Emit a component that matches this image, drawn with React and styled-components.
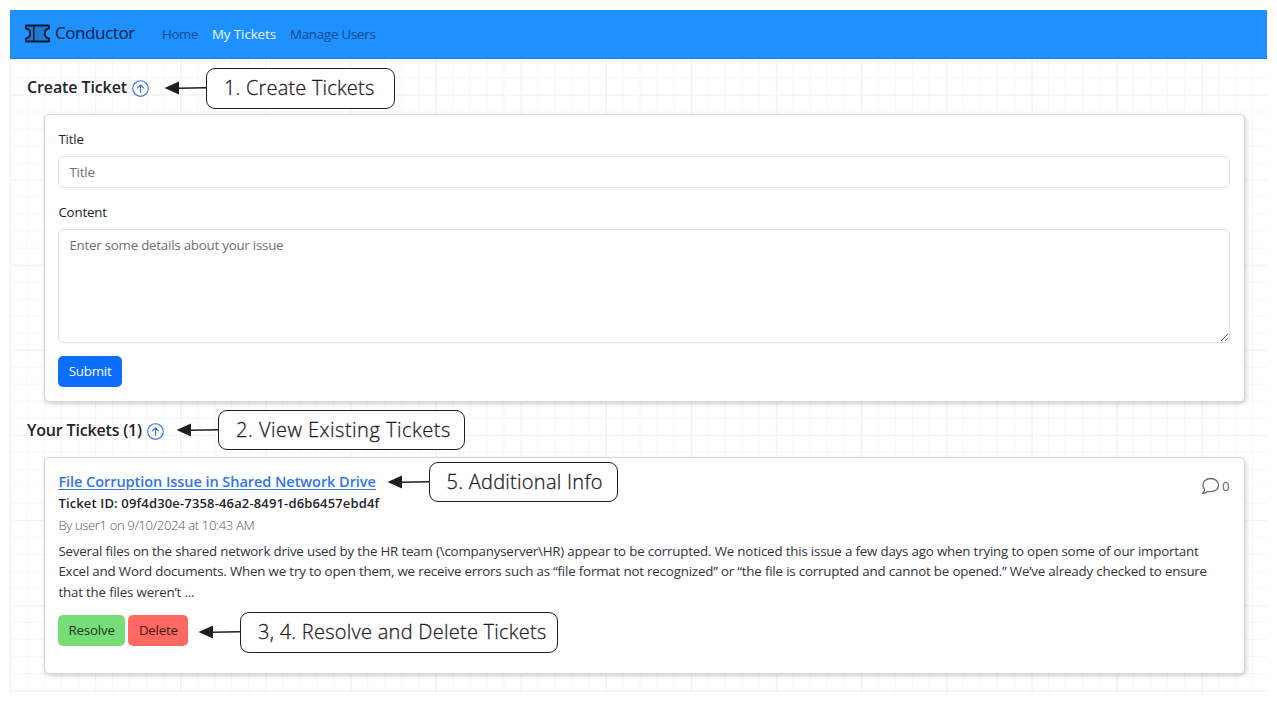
import React from "react";
import styled, { createGlobalStyle } from "styled-components";

const GlobalStyle = createGlobalStyle`
  * { box-sizing: border-box; }
  body {
    margin: 0;
    background: #fff;
    color: #212529;
    font-family: "Open Sans", "Noto Sans", sans-serif;
    font-size: 13.3px;
    letter-spacing: -0.172px;
  }
`;

const Page = styled.div`
  padding: 10px 10px 0;
`;

const Board = styled.div`
  position: relative;
  width: 1257px;
  height: 682.5px;
  background-color: #fff;
  background-image:
    linear-gradient(to right, #f1f1f1 1px, transparent 1px),
    linear-gradient(to bottom, #f1f1f1 1px, transparent 1px),
    linear-gradient(to right, #f7f7f7 1px, transparent 1px),
    linear-gradient(to bottom, #f7f7f7 1px, transparent 1px);
  background-size: 85.15px 85.15px, 85.15px 85.15px, 17.03px 17.03px, 17.03px 17.03px;
  background-position: 0 -0.6px;
`;

const Navbar = styled.nav`
  display: flex;
  align-items: center;
  height: 48.5px;
  padding-left: 15px;
  background: #1e90ff;
  border-bottom: 1px solid #1a7fe6;
`;

const Brand = styled.a`
  display: flex;
  align-items: center;
  gap: 5px;
  width: 137px;
  color: #05203c;
  font-size: 17px;
  letter-spacing: -0.42px;
  line-height: 24px;
  padding-bottom: 1px;
`;

const NavLinks = styled.div`
  display: flex;
  gap: 14px;
  padding-top: 1px;
`;

const NavLink = styled.a`
  color: ${(p) => (p.$active ? "#f0f7ff" : "#0f4c8a")};
  letter-spacing: ${(p) => p.$track || "-0.22px"};
  line-height: 20px;
  white-space: nowrap;
`;

const Section = styled.section`
  padding: 0 22.500px 0 17px;
`;

const SectionHeading = styled.h2`
  display: flex;
  align-items: center;
  gap: 5px;
  height: ${(p) => p.$height}px;
  margin: 0;
  padding-top: 1px;
  font-size: 16px;
  font-weight: 600;
  letter-spacing: ${(p) => p.$track};
  line-height: 24px;
  white-space: nowrap;

  svg { position: relative; top: 1.5px; }
`;

const Card = styled.div`
  position: relative;
  height: ${(p) => p.$height}px;
  margin-left: 17px;
  padding: 14px 13.400px;
  background: #fff;
  border: 1px solid #d6d7d8;
  border-radius: 5px;
  box-shadow: 1px 2px 4px rgba(0, 0, 0, 0.19);
`;

const Field = styled.label`
  display: block;
  margin-bottom: ${(p) => p.$gap}px;
  line-height: 20px;
`;

const control = `
  display: block;
  width: 100%;
  margin: 7px 0 0;
  padding: 5px 10px;
  border: 1px solid #dee2e6;
  border-radius: 5px;
  background: #fff;
  outline: none;
  font: inherit;
  letter-spacing: inherit;
  line-height: 20px;
  &::placeholder { color: #6b7075; opacity: 1; }
`;

const TextInput = styled.input`
  ${control}
  height: 32px;
`;

const TextArea = styled.textarea`
  ${control}
  height: 114px;
  letter-spacing: -0.22px;
  resize: vertical;
`;

const Button = styled.button`
  height: 31px;
  padding: 0 0 1px;
  width: ${(p) => p.$width}px;
  border: 0;
  border-radius: 5px;
  background: ${(p) => p.$bg};
  color: ${(p) => p.$color};
  font: inherit;
  letter-spacing: -0.19px;
`;

const Actions = styled.div`
  display: flex;
  gap: 3.5px;
  margin-top: 12.500px;
`;

const TicketTitle = styled.a`
  display: block;
  width: max-content;
  margin-top: -1px;
  color: #3273ee;
  font-size: 14.5px;
  font-weight: 600;
  letter-spacing: -0.05px;
  line-height: 21px;
  text-decoration: underline;
  text-underline-offset: 1.5px;
`;

const TicketId = styled.div`
  margin-top: 1px;
  font-size: 13px;
  font-weight: 600;
  letter-spacing: 0.15px;
  line-height: 21px;
`;

const Byline = styled.div`
  margin-top: 0.500px;
  color: #4f5459;
  font-size: 13px;
  font-weight: 300;
  letter-spacing: -0.33px;
  line-height: 20px;
`;

const Excerpt = styled.p`
  margin: 6px 0 0;
  color: #303439;
  line-height: 20.5px;
  white-space: nowrap;
`;

const Comments = styled.div`
  position: absolute;
  top: 18px;
  right: 14px;
  display: flex;
  align-items: center;
  gap: 2px;
  color: #5c6166;
  line-height: 20px;
`;

/* Annotations float over the page and point at its parts. */
const Callout = styled.div`
  position: absolute;
  left: ${(p) => p.$x}px;
  top: ${(p) => p.$y}px;
  display: flex;
  align-items: center;
`;

const CalloutBox = styled.div`
  width: ${(p) => p.$width}px;
  height: 40.500px;
  padding-left: 17px;
  border: 1.5px solid #1e1e1e;
  border-radius: 9px;
  background: #fff;
  color: #1e1e1e;
  font-size: 20px;
  font-weight: 300;
  -webkit-text-stroke: 0.3px #1e1e1e;
  letter-spacing: ${(p) => p.$track}px;
  line-height: 38px;
  white-space: nowrap;
`;

const TicketIcon = () => (
  <svg width="25" height="19" viewBox="0 0 25 19" fill="none" stroke="#071a2e" strokeWidth="1.9" strokeLinejoin="round">
    <path d="M1 1.5H24V4.5C20.5 5 19.8 7.3 19.8 9.5S20.5 14 24 14.5V17.5H1V14.5C4.500 14 5.2 11.700 5.2 9.500S4.500 5 1 4.500Z" fill="#1b78d4" />
    <path d="M8.800 1.500V17.500" strokeWidth="1.400" />
  </svg>
);

const ArrowCircle = () => (
  <svg width="17" height="17" viewBox="0 0 17 17" fill="none" stroke="#3b78ef" strokeWidth="1.15" strokeLinecap="round" strokeLinejoin="round">
    <circle cx="8.500" cy="8.500" r="7.800" />
    <path d="M8.500 12.300V4.900M5.400 7.900L8.500 4.800L11.600 7.900" />
  </svg>
);

const CommentIcon = () => (
  <svg width="19" height="18" viewBox="0 0 19 18" fill="none" stroke="#666b70" strokeWidth="1.300" strokeLinejoin="round">
    <path d="M9.600 1.500C5 1.500 1.900 4.400 1.900 8C1.900 9.800 2.600 11.300 3.700 12.400C3.500 14 2.700 15.400 1.500 16.400C3.500 16.300 5.300 15.700 6.500 14.300C7.500 14.600 8.500 14.700 9.600 14.700C14.200 14.700 17.600 11.800 17.600 8.100C17.600 4.400 14.200 1.500 9.600 1.500Z" />
  </svg>
);

const Arrow = () => (
  <svg width="42" height="14" viewBox="0 0 42 14">
    <path d="M14 7.200L42 6.700" stroke="#1e1e1e" strokeWidth="1.500" />
    <path d="M0.500 7L15 0.400V13.600Z" fill="#1e1e1e" />
  </svg>
);

const Note = ({ x, y, width, track, children }) => (
  <Callout $x={x} $y={y}>
    <Arrow />
    <CalloutBox $width={width} $track={track}>{children}</CalloutBox>
  </Callout>
);

export default function App() {
  return (
    <Page>
      <GlobalStyle />
      <Board>
        <Navbar>
          <Brand><TicketIcon />Conductor</Brand>
          <NavLinks>
            <NavLink $track="-0.4px">Home</NavLink>
            <NavLink $active $track="-0.07px">My Tickets</NavLink>
            <NavLink>Manage Users</NavLink>
          </NavLinks>
        </Navbar>

        <Section>
          <SectionHeading $track="-0.11px" $height={55.5}>Create Ticket <ArrowCircle /></SectionHeading>
          <Card $height={288}>
            <Field $gap={14}>
              Title
              <TextInput placeholder="Title" />
            </Field>
            <Field $gap={13}>
              Content
              <TextArea placeholder="Enter some details about your issue" />
            </Field>
            <Button $width={63.5} $bg="#0d6efd" $color="#fff">Submit</Button>
          </Card>
        </Section>

        <Section>
          <SectionHeading $track="-0.18px" $height={55}>Your Tickets (1) <ArrowCircle /></SectionHeading>
          <Card $height={217}>
            <Comments><CommentIcon />0</Comments>
            <TicketTitle>File Corruption Issue in Shared Network Drive</TicketTitle>
            <TicketId>Ticket ID: 09f4d30e-7358-46a2-8491-d6b6457ebd4f</TicketId>
            <Byline>By user1 on 9/10/2024 at 10:43 AM</Byline>
            <Excerpt>
              Several files on the shared network drive used by the HR team (\companyserver\HR) appear to be corrupted. We noticed this issue a few days ago when trying to open some of our important
              <br />
              Excel and Word documents. When we try to open them, we receive errors such as “file format not recognized” or “the file is corrupted and cannot be opened.” We’ve already checked to ensure
              <br />
              that the files weren’t ...
            </Excerpt>
            <Actions>
              <Button $width={66.5} $bg="#77dd77" $color="#1c351c">Resolve</Button>
              <Button $width={60} $bg="#ff6961" $color="#3d1917">Delete</Button>
            </Actions>
          </Card>
        </Section>

        <Note x={154} y={58} width={189} track={0.19}>1. Create Tickets</Note>
        <Note x={166} y={399.5} width={247} track={0.5}>2. View Existing Tickets</Note>
        <Note x={376.5} y={451.5} width={189} track={0.27}>5. Additional Info</Note>
        <Note x={188} y={602} width={318} track={0.26}>3, 4. Resolve and Delete Tickets</Note>
      </Board>
    </Page>
  );
}
